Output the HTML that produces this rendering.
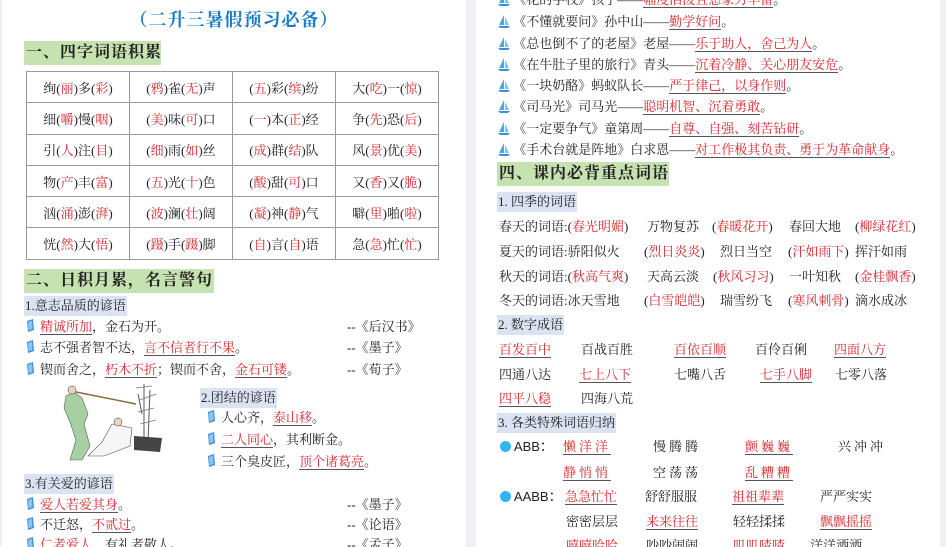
<!DOCTYPE html>
<html><head><meta charset="utf-8">
<style>
*{margin:0;padding:0;box-sizing:border-box}
body{width:946px;height:547px;overflow:hidden;background:#eef0f5;position:relative;font-family:"Liberation Serif","Noto Serif CJK SC",serif;font-size:13px;color:#222}
.pg{position:absolute;top:0;height:547px;background:#fff;overflow:hidden}
.a{position:absolute;white-space:nowrap;line-height:18px}
.r{color:#d8262c}
.u{color:#d8262c;border-bottom:1px solid #555}
.h1{position:absolute;background:#c6e2b0;font-size:16px;font-weight:bold;line-height:24px;height:24px;padding-left:2px;color:#222;letter-spacing:1px;white-space:nowrap;overflow:hidden}
.h2{position:absolute;background:#dbe3f2;line-height:20px;padding:0 1px;white-space:nowrap}
table{position:absolute;border-collapse:collapse;table-layout:fixed;width:412px}
td{border:1px solid #999;width:103px;height:31.3px;text-align:center;font-size:13px}
.bk{position:absolute;width:9px;height:13px}
</style></head><body>
<div class="pg" style="left:2px;width:464px">
<div class="a" style="left:0;width:464px;text-align:center;top:8px;font-size:18px;font-weight:bold;color:#1a7bc8;line-height:24px;letter-spacing:1px">（二升三暑假预习必备）</div>
<div class="h1" style="left:22px;top:41px;width:137px">一、四字词语积累</div>
<table style="left:24px;top:71px">
<tr><td>绚(<span class="r">丽</span>)多(<span class="r">彩</span>)</td><td>(<span class="r">鸦</span>)雀(<span class="r">无</span>)声</td><td>(<span class="r">五</span>)彩(<span class="r">缤</span>)纷</td><td>大(<span class="r">吃</span>)一(<span class="r">惊</span>)</td></tr>
<tr><td>细(<span class="r">嚼</span>)慢(<span class="r">咽</span>)</td><td>(<span class="r">美</span>)味(<span class="r">可</span>)口</td><td>(<span class="r">一</span>)本(<span class="r">正</span>)经</td><td>争(<span class="r">先</span>)恐(<span class="r">后</span>)</td></tr>
<tr><td>引(<span class="r">人</span>)注(<span class="r">目</span>)</td><td>(<span class="r">细</span>)雨(<span class="r">如</span>)丝</td><td>(<span class="r">成</span>)群(<span class="r">结</span>)队</td><td>风(<span class="r">景</span>)优(<span class="r">美</span>)</td></tr>
<tr><td>物(<span class="r">产</span>)丰(<span class="r">富</span>)</td><td>(<span class="r">五</span>)光(<span class="r">十</span>)色</td><td>(<span class="r">酸</span>)甜(<span class="r">可</span>)口</td><td>又(<span class="r">香</span>)又(<span class="r">脆</span>)</td></tr>
<tr><td>汹(<span class="r">涌</span>)澎(<span class="r">湃</span>)</td><td>(<span class="r">波</span>)澜(<span class="r">壮</span>)阔</td><td>(<span class="r">凝</span>)神(<span class="r">静</span>)气</td><td>噼(<span class="r">里</span>)啪(<span class="r">啦</span>)</td></tr>
<tr><td>恍(<span class="r">然</span>)大(<span class="r">悟</span>)</td><td>(<span class="r">蹑</span>)手(<span class="r">蹑</span>)脚</td><td>(<span class="r">自</span>)言(<span class="r">自</span>)语</td><td>急(<span class="r">急</span>)忙(<span class="r">忙</span>)</td></tr>
</table>
<div class="h1" style="left:22px;top:269px;width:190px">二、日积月累，名言警句</div>
<div class="h2" style="left:22px;top:296px">1.意志品质的谚语</div>
<svg class="bk" style="left:24px;top:319px" viewBox="0 0 9 13"><path d="M1 2 L7 0 L8 11 L2 13Z" fill="#3a8fd8"/><path d="M2 3 L6 1.5 L6.5 10 L2.5 11.5Z" fill="#8cc4ef"/></svg>
<div class="a" style="left:38px;top:318px"><span class="u">精诚所加</span>，金石为开。</div>
<div class="a" style="left:345px;top:318px">--《后汉书》</div>
<svg class="bk" style="left:24px;top:340px" viewBox="0 0 9 13"><path d="M1 2 L7 0 L8 11 L2 13Z" fill="#3a8fd8"/><path d="M2 3 L6 1.5 L6.5 10 L2.5 11.5Z" fill="#8cc4ef"/></svg>
<div class="a" style="left:38px;top:339px">志不强者智不达，<span class="u">言不信者行不果</span>。</div>
<div class="a" style="left:345px;top:339px">--《墨子》</div>
<svg class="bk" style="left:24px;top:362px" viewBox="0 0 9 13"><path d="M1 2 L7 0 L8 11 L2 13Z" fill="#3a8fd8"/><path d="M2 3 L6 1.5 L6.5 10 L2.5 11.5Z" fill="#8cc4ef"/></svg>
<div class="a" style="left:38px;top:361px">锲而舍之，<span class="u">朽木不折</span>；锲而不舍，<span class="u">金石可镂</span>。</div>
<div class="a" style="left:345px;top:361px">--《荀子》</div>
<svg style="position:absolute;left:58px;top:384px" width="104" height="80" viewBox="0 0 104 80">
<path d="M6 12 L14 8 L22 14 L28 30 L24 40 L30 62 L22 76 L10 76 L16 56 L10 38 L4 24Z" fill="#a8cfa4" stroke="#4a6a4a" stroke-width=".6"/>
<circle cx="12" cy="6" r="4" fill="#e8d6c0" stroke="#333" stroke-width=".5"/>
<path d="M16 8 L76 20" stroke="#8a6a40" stroke-width="1.5"/>
<path d="M84 0 L84 60 M90 6 L88 58 M78 10 L82 30" stroke="#556" stroke-width="1"/>
<path d="M76 4 L92 2 M80 16 L96 10 M78 28 L94 24 M80 40 L96 36" stroke="#777" stroke-width=".8"/>
<path d="M74 52 L102 54 L100 68 L74 66Z" fill="#444"/>
<path d="M52 40 L72 44 L70 62 L44 72 L28 72 L42 58Z" fill="#f6f6f6" stroke="#555" stroke-width=".6"/>
<circle cx="58" cy="38" r="4" fill="#e8d6c0" stroke="#333" stroke-width=".5"/>
</svg>
<div class="h2" style="left:198px;top:388px">2.团结的谚语</div>
<svg class="bk" style="left:205px;top:410px" viewBox="0 0 9 13"><path d="M1 2 L7 0 L8 11 L2 13Z" fill="#3a8fd8"/><path d="M2 3 L6 1.5 L6.5 10 L2.5 11.5Z" fill="#8cc4ef"/></svg>
<div class="a" style="left:219px;top:409px">人心齐，<span class="u">泰山移</span>。</div>
<svg class="bk" style="left:205px;top:432px" viewBox="0 0 9 13"><path d="M1 2 L7 0 L8 11 L2 13Z" fill="#3a8fd8"/><path d="M2 3 L6 1.5 L6.5 10 L2.5 11.5Z" fill="#8cc4ef"/></svg>
<div class="a" style="left:219px;top:431px"><span class="u">二人同心</span>，其利断金。</div>
<svg class="bk" style="left:205px;top:454px" viewBox="0 0 9 13"><path d="M1 2 L7 0 L8 11 L2 13Z" fill="#3a8fd8"/><path d="M2 3 L6 1.5 L6.5 10 L2.5 11.5Z" fill="#8cc4ef"/></svg>
<div class="a" style="left:219px;top:453px">三个臭皮匠，<span class="u">顶个诸葛亮</span>。</div>
<div class="h2" style="left:22px;top:474px">3.有关爱的谚语</div>
<svg class="bk" style="left:24px;top:497px" viewBox="0 0 9 13"><path d="M1 2 L7 0 L8 11 L2 13Z" fill="#3a8fd8"/><path d="M2 3 L6 1.5 L6.5 10 L2.5 11.5Z" fill="#8cc4ef"/></svg>
<div class="a" style="left:38px;top:496px"><span class="u">爱人若爱其身</span>。</div>
<div class="a" style="left:345px;top:496px">--《墨子》</div>
<svg class="bk" style="left:24px;top:517px" viewBox="0 0 9 13"><path d="M1 2 L7 0 L8 11 L2 13Z" fill="#3a8fd8"/><path d="M2 3 L6 1.5 L6.5 10 L2.5 11.5Z" fill="#8cc4ef"/></svg>
<div class="a" style="left:38px;top:516px">不迁怒，<span class="u">不贰过</span>。</div>
<div class="a" style="left:345px;top:516px">--《论语》</div>
<svg class="bk" style="left:24px;top:537px" viewBox="0 0 9 13"><path d="M1 2 L7 0 L8 11 L2 13Z" fill="#3a8fd8"/><path d="M2 3 L6 1.5 L6.5 10 L2.5 11.5Z" fill="#8cc4ef"/></svg>
<div class="a" style="left:38px;top:536px"><span class="u">仁者爱人</span>，有礼者敬人。</div>
<div class="a" style="left:345px;top:536px">--《孟子》</div>
</div>

<div class="pg" style="left:476px;width:464px">
<svg width="0" height="0" style="position:absolute"><defs><g id="sb"><path d="M6 0 L6 10 L1 10Z" fill="#4aa8e0"/><path d="M7 2 L7 10 L11 10Z" fill="#7cc4ee"/><path d="M0 11 L12 11 L10 13 L2 13Z" fill="#3a8fd8"/></g></defs></svg>
<div class="a" style="left:22px;top:-9px"><svg width="12" height="13" style="vertical-align:-2px"><use href="#sb"/></svg> 《花的学校》孩子——<span class="u">幅度活泼且想象力丰富</span>。</div>
<div class="a" style="left:22px;top:13px"><svg width="12" height="13" style="vertical-align:-2px"><use href="#sb"/></svg> 《不懂就要问》孙中山——<span class="u">勤学好问</span>。</div>
<div class="a" style="left:22px;top:35px"><svg width="12" height="13" style="vertical-align:-2px"><use href="#sb"/></svg> 《总也倒不了的老屋》老屋——<span class="u">乐于助人，舍己为人</span>。</div>
<div class="a" style="left:22px;top:56px"><svg width="12" height="13" style="vertical-align:-2px"><use href="#sb"/></svg> 《在牛肚子里的旅行》青头——<span class="u">沉着冷静、关心朋友安危</span>。</div>
<div class="a" style="left:22px;top:77px"><svg width="12" height="13" style="vertical-align:-2px"><use href="#sb"/></svg> 《一块奶酪》蚂蚁队长——<span class="u">严于律己，以身作则</span>。</div>
<div class="a" style="left:22px;top:98px"><svg width="12" height="13" style="vertical-align:-2px"><use href="#sb"/></svg> 《司马光》司马光——<span class="u">聪明机智、沉着勇敢</span>。</div>
<div class="a" style="left:22px;top:120px"><svg width="12" height="13" style="vertical-align:-2px"><use href="#sb"/></svg> 《一定要争气》童第周——<span class="u">自尊、自强、刻苦钻研</span>。</div>
<div class="a" style="left:22px;top:141px"><svg width="12" height="13" style="vertical-align:-2px"><use href="#sb"/></svg> 《手术台就是阵地》白求恩——<span class="u">对工作极其负责、勇于为革命献身</span>。</div>
<div class="h1" style="left:21px;top:162px;width:172px">四、课内必背重点词语</div>
<div class="h2" style="left:21px;top:192px">1. 四季的词语</div>
<div class="a" style="left:23px;top:218px">春天的词语:(<span class="r">春光明媚</span>)</div><div class="a" style="left:171px;top:218px">万物复苏</div><div class="a" style="left:236px;top:218px">(<span class="r">春暖花开</span>)</div><div class="a" style="left:313px;top:218px">春回大地</div><div class="a" style="left:379px;top:218px">(<span class="r">柳绿花红</span>)</div>
<div class="a" style="left:23px;top:243px">夏天的词语:骄阳似火</div><div class="a" style="left:168px;top:243px">(<span class="r">烈日炎炎</span>)</div><div class="a" style="left:244px;top:243px">烈日当空</div><div class="a" style="left:312px;top:243px">(<span class="r">汗如雨下</span>)</div><div class="a" style="left:379px;top:243px">挥汗如雨</div>
<div class="a" style="left:23px;top:268px">秋天的词语:(<span class="r">秋高气爽</span>)</div><div class="a" style="left:171px;top:268px">天高云淡</div><div class="a" style="left:237px;top:268px">(<span class="r">秋风习习</span>)</div><div class="a" style="left:313px;top:268px">一叶知秋</div><div class="a" style="left:379px;top:268px">(<span class="r">金桂飘香</span>)</div>
<div class="a" style="left:23px;top:292px">冬天的词语:冰天雪地</div><div class="a" style="left:168px;top:292px">(<span class="r">白雪皑皑</span>)</div><div class="a" style="left:244px;top:292px">瑞雪纷飞</div><div class="a" style="left:312px;top:292px">(<span class="r">寒风刺骨</span>)</div><div class="a" style="left:379px;top:292px">滴水成冰</div>
<div class="h2" style="left:21px;top:315px">2. 数字成语</div>
<div class="a" style="left:23px;top:341px"><span class="u">百发百中</span></div><div class="a" style="left:105px;top:341px">百战百胜</div><div class="a" style="left:198px;top:341px"><span class="u">百依百顺</span></div><div class="a" style="left:279px;top:341px">百伶百俐</div><div class="a" style="left:358px;top:341px"><span class="u">四面八方</span></div>
<div class="a" style="left:23px;top:366px">四通八达</div><div class="a" style="left:103px;top:366px"><span class="u">七上八下</span></div><div class="a" style="left:198px;top:366px">七嘴八舌</div><div class="a" style="left:284px;top:366px"><span class="u">七手八脚</span></div><div class="a" style="left:359px;top:366px">七零八落</div>
<div class="a" style="left:23px;top:390px"><span class="u">四平八稳</span></div><div class="a" style="left:105px;top:390px">四海八荒</div>
<div class="h2" style="left:21px;top:413px">3. 各类特殊词语归纳</div>
<div class="a" style="left:24px;top:438px;font-family:'Liberation Sans',sans-serif"><span style="display:inline-block;width:11px;height:11px;border-radius:50%;background:#2fb6ef;vertical-align:-1px"></span> ABB：</div>
<div class="a" style="left:87px;top:438px;letter-spacing:3px"><span class="u">懒洋洋</span></div><div class="a" style="left:177px;top:438px;letter-spacing:3px">慢腾腾</div><div class="a" style="left:269px;top:438px;letter-spacing:3px"><span class="u">颤巍巍</span></div><div class="a" style="left:362px;top:438px;letter-spacing:3px">兴冲冲</div>
<div class="a" style="left:87px;top:464px;letter-spacing:3px"><span class="u">静悄悄</span></div><div class="a" style="left:177px;top:464px;letter-spacing:3px">空荡荡</div><div class="a" style="left:269px;top:464px;letter-spacing:3px"><span class="u">乱糟糟</span></div>
<div class="a" style="left:24px;top:488px;font-family:'Liberation Sans',sans-serif"><span style="display:inline-block;width:11px;height:11px;border-radius:50%;background:#2fb6ef;vertical-align:-1px"></span> AABB：</div>
<div class="a" style="left:89px;top:488px"><span class="u">急急忙忙</span></div><div class="a" style="left:169px;top:488px">舒舒服服</div><div class="a" style="left:256px;top:488px"><span class="u">祖祖辈辈</span></div><div class="a" style="left:344px;top:488px">严严实实</div>
<div class="a" style="left:90px;top:513px">密密层层</div><div class="a" style="left:170px;top:513px"><span class="u">来来往往</span></div><div class="a" style="left:257px;top:513px">轻轻揉揉</div><div class="a" style="left:344px;top:513px"><span class="u">飘飘摇摇</span></div>
<div class="a" style="left:90px;top:537px"><span class="u">嘻嘻哈哈</span></div><div class="a" style="left:170px;top:537px">吵吵闹闹</div><div class="a" style="left:257px;top:537px"><span class="u">叽叽喳喳</span></div><div class="a" style="left:334px;top:537px">洋洋洒洒</div>
</div>
</body></html>
